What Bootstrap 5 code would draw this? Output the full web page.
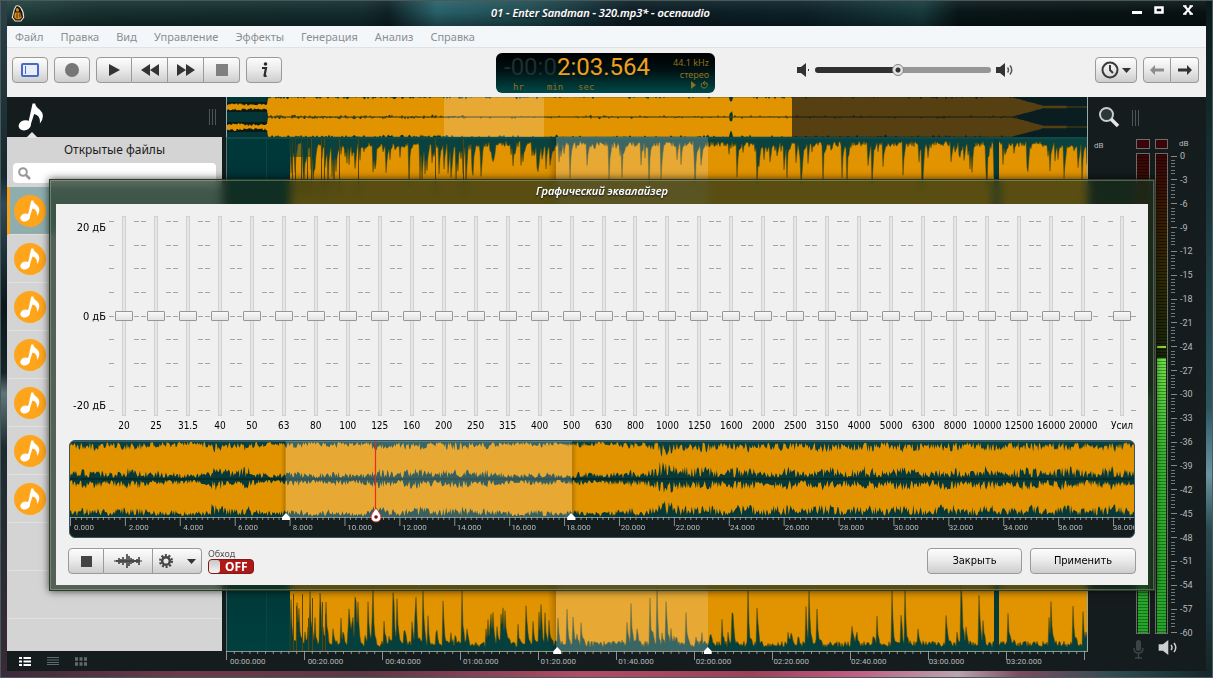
<!DOCTYPE html>
<html lang="ru">
<head>
<meta charset="utf-8">
<meta name="viewport" content="width=device-width, initial-scale=1">
<title>01 - Enter Sandman - 320.mp3* - ocenaudio</title>
<link href="https://cdn.jsdelivr.net/npm/bootstrap@5.3.0/dist/css/bootstrap.min.css" rel="stylesheet">
<script src="https://cdn.jsdelivr.net/npm/bootstrap@5.3.0/dist/js/bootstrap.bundle.min.js"></script>
<style>
:root { --ink:#141c1e; --amber:#e29400; --face:#f0f0f0; --edge:#9a9a9a; }
body { font-family:"DejaVu Sans Condensed","Noto Sans",sans-serif; font-size:11px; line-height:14px; color:#000; overflow:hidden; }
svg { display:block; }
.desk { min-height:100vh; padding:0 7px 7px; box-shadow:inset 0 0 0 1px #46595b;
  background:
   linear-gradient(90deg,#3a2a38 0,#6d3a4a 15%,#5c3644 30%,#b04c66 48%,#9c4058 62%,#c05a80 70%,#b9a3b0 79%,#7c4c60 84%,#2e4a50 92%,#14262a) bottom/100% 7px no-repeat,
   linear-gradient(180deg,#2c4248 0,#16282e 26%,#2f4a58 30%,#0c171b 45%,#15252a 55%,#61767a 58%,#1c2c30 66%,#3a2a38) left/7px 100% no-repeat,
   linear-gradient(180deg,#0b1a1c 0,#173034 25%,#2c5560 60%,#6a95a0 70%,#2a4a50 78%,#132427) right/7px 100% no-repeat,
   linear-gradient(180deg,rgba(255,255,255,.08),transparent 12px,rgba(0,0,0,.35) 26px) top/100% 26px no-repeat,
   linear-gradient(90deg,#22403f 0,#16302f 8%,#132c2e 30%,#0e2126 32%,#286068 36%,#1e4a50 44%,#0c1c24 52%,#0c2128 66%,#173a3c 76%,#091617 79%,#081213 100%) top/100% 26px no-repeat, #0e1a1c; }
.captionbar { height:26px; }
.captionbar h1, .dialog-title { font:italic 600 11px/14px "Open Sans","Noto Sans",sans-serif; color:#fff; text-shadow:0 1px 2px #000,0 0 1px #cdd; margin:0; }
.side-eq { flex:1 1 0; }
.winbtns { gap:9px; padding:5px 12px 0 0; }
.winbtn { border:0; background:none; padding:0; line-height:0; }
.menu-strip { height:22px; background:#f4f7fa; border-bottom:1px solid #dfe3e6; padding-left:8px; gap:17px; font:11px/21px "Noto Sans",sans-serif; }
.menu-strip a { color:#8b8e90; text-decoration:none; }
.toolstrip { height:49px; background:var(--face); display:grid; grid-template-columns:1fr auto 1fr; align-items:start; padding:5px 7px 0 5px; }
.tools { gap:6px; }
.volume { gap:5px; padding-left:6px; }
.tbtn { height:26px; min-width:36px; padding:0 5px; border:1px solid var(--edge); border-radius:4px; background:linear-gradient(#fdfdfd,#e9e9e9 50%,#cdcdcd); display:flex; align-items:center; justify-content:center; color:#3a3a3a; font-size:11px; line-height:14px; }
.tbtn:hover { background:linear-gradient(#fff,#eee 50%,#d6d6d6); }
.tbtn-arrow { min-width:28px; }
.tbtn-wave { min-width:49px; }
.lcd { width:219px; height:40px; border-radius:6px; background:linear-gradient(#000,#001214 45%,#004a48); color:#94701c; padding:0 6px 0 8px; font:9px/12px "Noto Sans",sans-serif; }
.lcd-time { font:24px/29px Roboto,sans-serif; color:#f0a01c; }
.lcd-dim { color:#1e2f31; }
.lcd-units { font:9px/10px "DejaVu Sans Mono",monospace; padding-left:9px; gap:15px; }
.lcd-info { padding-top:4px; }
.hslider { appearance:none; -webkit-appearance:none; width:176px; height:14px; background:none; margin:0; }
.hslider::-webkit-slider-runnable-track { height:6px; border-radius:3px; background:linear-gradient(90deg,#303030 47%,#969696 47%); }
.hslider::-webkit-slider-thumb { -webkit-appearance:none; width:12px; height:12px; margin-top:-3px; border-radius:50%; border:1px solid #858585; background:radial-gradient(circle,#333 0 2px,#e2e2e2 3px); }
.workspace { background:var(--ink); }
.filepane { width:215px; margin-right:4px; }
.filehead { height:40px; padding:0 5px 0 11px; }
.grip { width:8px; height:16px; background:repeating-linear-gradient(90deg,#4c5658 0 1px,transparent 1px 3px); }
.filebody { background:#d4d4d4; font-size:12px; }
.notch { width:12px; height:6px; margin:-5px 0 0 19px; background:#e4e4e4; clip-path:polygon(50% 0,100% 100%,0 100%); }
.filebody h2 { font:12px/16px "Noto Sans",sans-serif; color:#1c1c1c; margin:4px 0 5px; }
.seek { margin:0 6px 4px; height:20px; background:#fff; border-radius:4px; padding:0 5px; }
.seek input { border:0; outline:0; background:none; font-size:11px; padding:0 4px; min-width:0; }
.filerow { height:48px; border-bottom:1px solid #e0e0e0; border-left:3px solid transparent; padding-left:4px; }
.filerow.chosen { background:#8fadad; border-left-color:#f5a11c; }
.disc { width:32px; height:32px; border-radius:50%; background:#ffa51c; color:#fff; }
.viewbar { height:20px; padding-left:12px; gap:16px; }
.viewbar button { border:0; background:none; padding:0; color:#606a6c; }
.overview { height:40px; border-left:1px solid #9aa; border-right:1px solid #9aa; }
.mainwave { border-left:1px solid #5a7474; border-right:1px solid #9aa; position:relative; z-index:1; }
.mainwave svg, .overview svg, .clipwave svg, .scale svg { width:100%; height:100%; }
.mainwave svg { position:absolute; inset:0; }
.scale { height:20px; position:relative; }
.scale svg { position:absolute; inset:0; }
.scale-labels { position:absolute; inset:0; overflow:hidden; padding:6px 0 0 4px; display:flex; font:8px/9px Roboto,sans-serif; color:#b4babb; white-space:nowrap; }
.scale-labels span { flex:none; }
.marker { position:absolute; bottom:-3px; width:8px; height:7px; margin-left:-4px; background:#fff; clip-path:polygon(50% 0,100% 60%,100% 100%,0 100%,0 60%); }
.levels { width:118px; font:8px/8px Roboto,sans-serif; color:#b4babb; }
.levels-head { height:42px; padding:9px 0 0 10px; gap:12px; }
.db-left { width:50px; padding:3px 0 0 6px; }
.meter { width:14px; }
.meter + .meter { margin-left:5px; }
.clip-lamp { height:10px; border:1px solid #6c6c6c; background:#3a0508; margin-bottom:4px; }
.meter-body { border:1px solid #6c6c6c; background:repeating-linear-gradient(180deg,rgba(0,0,0,.45) 0 1px,transparent 1px 3px),linear-gradient(#3c0407,#3a1c04 12%,#2e2b05 25%,#14260a 45%); display:flex; flex-direction:column; justify-content:flex-end; }
.meter-fill { margin:0 1px; background:repeating-linear-gradient(180deg,rgba(0,40,0,.4) 0 1px,transparent 1px 3px),linear-gradient(#6fe04a,#39b532 35%,#25a32b); }
.peak { height:2px; margin:0 1px 10px; background:#8fd23c; }
.dbscale { width:35px; margin:13px 0 -3px 3px; font-size:9px; }
.dbscale > div { height:8px; }
.db-right { position:absolute; left:11px; top:1px; }
.dbscale i { width:6px; height:1px; background:#888; margin-right:3px; }
.dbticks { background:repeating-linear-gradient(180deg,#70797a 0 1px,transparent 1px 20%); width:4px; }
.audio-foot { height:37px; padding:6px 0 0 44px; gap:12px; }
/* equalizer dialog */
.eq { position:absolute; z-index:5; left:49px; right:58px; top:179px; padding:0 6px 5px; border:1px solid #2b3a2c; background:rgba(24,44,26,.68); backdrop-filter:blur(5px); box-shadow:inset 0 0 0 1px rgba(190,210,170,.35),0 0 8px rgba(0,0,0,.7); }
.dialog-title { height:24px; padding-top:4px; text-align:center; }
.eq-body { background:var(--face); padding:12px 12px 11px; }
.bands { display:grid; grid-template-columns:40px 992fr 38fr; margin-right:-1px; }
.gainlabels { height:200px; padding:5px 2px 3px 0; margin-left:-12px; }
.band { flex:1 1 0; min-width:0; }
.band-rail { height:200px; position:relative; }
.band-ticks { position:absolute; left:0; right:0; top:5px; bottom:5px; padding:0 1px; }
.band-ticks i { height:1px; background:linear-gradient(90deg,#a4a4a4 5px,transparent 5px calc(100% - 5px),#a4a4a4 calc(100% - 5px)); }
.vslider { position:absolute; left:50%; top:50%; width:200px; height:18px; margin:0; appearance:none; -webkit-appearance:none; background:none; transform:translate(-50%,-50%) rotate(-90deg); }
.vslider::-webkit-slider-runnable-track { height:4px; background:#e6e6e6; border:1px solid #d0d0d0; }
.vslider::-webkit-slider-thumb { -webkit-appearance:none; width:10px; height:18px; margin-top:-8px; background:linear-gradient(90deg,#e2e2e2,#f8f8f8); border:1px solid #969696; border-radius:1px; }
.band label { font-size:10px; line-height:20px; white-space:nowrap; }
.clip { background:var(--ink); border:1px solid #39535a; border-radius:6px; overflow:hidden; margin:4px 1px 10px; }
.clipwave { height:76px; position:relative; z-index:1; }
.playhead { position:absolute; top:0; bottom:-6px; width:12px; margin-left:-6px; }
.playhead::before { content:""; position:absolute; left:5px; top:0; bottom:14px; width:1px; background:#f02a18; box-shadow:0 0 1px #f02a18; }
.playhead svg { position:absolute; left:0; bottom:0; width:12px; height:16px; }
.bypass { font:9px/10px "Noto Sans",sans-serif; color:#555; margin-left:6px; }
.bypass input { appearance:none; -webkit-appearance:none; position:absolute; inset:0; margin:0; width:100%; height:100%; }
.toggle-face { position:relative; width:46px; height:15px; border-radius:4px; border:1px solid #7c1a1a; background:#b01818; color:#fff; font:bold 12px/13px "Noto Sans",sans-serif; padding-left:16px; }
.toggle-face::before { content:""; position:absolute; left:0; top:0; bottom:0; width:11px; border-radius:3px; background:linear-gradient(#c8c8c8,#f4f4f4); }
.pushbtn { font-size:11px; color:#000; min-width:95px; }
.pushbtn-wide { min-width:106px; }
</style>
</head>
<body>
<svg width="0" height="0" class="position-absolute" aria-hidden="true">
  <symbol id="note" viewBox="0 0 24 27"><ellipse cx="6" cy="21.5" rx="6" ry="4.8" transform="rotate(-18 6 21.5)" fill="currentColor"/><path d="M9 21 13.500.5H16Q16.500 4 20.500 6.500 26.500 12 20.500 20 21.500 12 15 10.500L12 20Q11 23.500 8 24.500Z" fill="currentColor"/></symbol>
  <symbol id="spk" viewBox="0 0 10 14"><path d="M0 4h4l5-4v14L4 10H0Z" fill="currentColor"/></symbol>
</svg>
<div class="desk d-flex flex-column position-relative">
  <header class="captionbar d-flex align-items-center">
    <div class="side-eq">
      <svg width="14" height="17" viewBox="0 0 14 18" class="ms-1"><path d="M5 1Q8 0 10 3Q13 7 13 13L10 17H4L1 13Q2 9 3 5Z" fill="#16100a" stroke="#e8e0d0" stroke-width="1.200"/><path d="M5 4Q7 2 8 5V7H5ZM3.500 8h6l1.500 5-2 2H5l-2-2Z" fill="#d98a1c"/><path d="M6 9v5M9 9v4" stroke="#3a2408"/></svg>
    </div>
    <h1>01 - Enter Sandman - 320.mp3* - ocenaudio</h1>
    <div class="side-eq winbtns d-flex justify-content-end align-self-start">
      <button class="winbtn" aria-label="Свернуть"><svg width="14" height="10" viewBox="0 0 14 10"><path d="M2 6h10v3H2Z" fill="#fff"/></svg></button>
      <button class="winbtn" aria-label="Развернуть"><svg width="12" height="10" viewBox="0 0 12 10"><path d="M2.500 2.500h7v5h-7Z" fill="none" stroke="#fff" stroke-width="2.500"/></svg></button>
      <button class="winbtn ms-2" aria-label="Закрыть окно"><svg width="12" height="10" viewBox="0 0 12 10"><path d="M2.500 1l7 8M9.500 1l-7 8" stroke="#fff" stroke-width="2"/><path d="M1 1h3.500M7.500 1H11M1 9h3.500M7.500 9H11" stroke="#fff" stroke-width="1.500"/></svg></button>
    </div>
  </header>

  <nav class="menu-strip d-flex">
    <a href="#">Файл</a><a href="#">Правка</a><a href="#">Вид</a><a href="#">Управление</a><a href="#">Эффекты</a><a href="#">Генерация</a><a href="#">Анализ</a><a href="#">Справка</a>
  </nav>

  <div class="toolstrip">
    <div class="tools d-flex pt-1">
      <button class="tbtn" aria-label="Панель"><svg width="18" height="14" viewBox="0 0 18 14"><rect x="1" y="1" width="16" height="12" rx="1" fill="#e9eefb" stroke="#4a68c8" stroke-width="2"/><path d="M4.500 3v8" stroke="#4a68c8"/></svg></button>
      <button class="tbtn" aria-label="Запись"><svg width="14" height="14"><circle cx="7" cy="7" r="7" fill="#767676"/></svg></button>
      <div class="btn-group">
        <button class="tbtn rounded-end-0" aria-label="Пуск"><svg width="12" height="12"><path d="M1 0 12 6 1 12Z" fill="#333"/></svg></button>
        <button class="tbtn rounded-0 border-start-0" aria-label="Назад"><svg width="18" height="12"><path d="M9 0v12L0 6ZM18 0v12L9 6Z" fill="#333"/></svg></button>
        <button class="tbtn rounded-0 border-start-0" aria-label="Вперёд"><svg width="18" height="12"><path d="M0 0v12l9-6ZM9 0v12l9-6Z" fill="#333"/></svg></button>
        <button class="tbtn rounded-start-0 border-start-0" aria-label="Стоп"><svg width="12" height="12"><path d="M0 0h12v12H0Z" fill="#808080"/></svg></button>
      </div>
      <button class="tbtn" aria-label="Сведения"><svg width="9" height="16" viewBox="0 0 9 16"><circle cx="5.500" cy="2" r="1.800" fill="#2c2c2c"/><path d="M2 6h4L4.500 13.500q0 1 2 0" fill="none" stroke="#2c2c2c" stroke-width="2.200"/></svg></button>
    </div>
    <div class="lcd d-flex justify-content-between">
      <div>
        <div class="lcd-time"><span class="lcd-dim">-00:0</span>2:03.564</div>
        <div class="lcd-units d-flex"><span class="me-2">hr</span><span>min</span><span>sec</span></div>
      </div>
      <div class="lcd-info text-end"><div>44.1 kHz</div><div>стерео</div><svg width="18" height="8" class="ms-auto"><path d="M0 0 5 4 0 8Z" fill="#8c701c"/><path d="M11 2Q9 7 13 7T16 2H12M14 0l-2 2 2 2" fill="none" stroke="#8c701c"/></svg></div>
    </div>
    <div class="tools d-flex align-items-center pt-1">
      <div class="volume d-flex align-items-center mx-auto">
        <svg width="13" height="14" viewBox="0 0 13 14" color="#333"><use href="#spk" width="10" height="14"/><path d="M11.500 6v2" stroke="#333"/></svg>
        <input class="hslider" type="range" value="47" aria-label="Громкость">
        <svg width="18" height="14" viewBox="0 0 18 14" color="#333"><use href="#spk" width="10" height="14"/><path d="M11.500 4.500q2 2.500 0 5M14 2.500q3.500 4.500 0 9" fill="none" stroke="#555" stroke-width="1.500"/></svg>
      </div>
      <button class="tbtn" aria-label="История"><svg width="30" height="18" viewBox="0 0 30 18"><circle cx="9" cy="9" r="7.500" fill="none" stroke="#3a3a3a" stroke-width="2"/><path d="M9 4v5l3 3" fill="none" stroke="#3a3a3a" stroke-width="2"/><path d="M21 7h9l-4.500 5Z" fill="#333"/></svg></button>
      <div class="btn-group">
        <button class="tbtn tbtn-arrow rounded-end-0" aria-label="Отменить"><svg width="14" height="10"><path d="M0 5 5 0v3.500h9v3H5V10Z" fill="#8c8c8c"/></svg></button>
        <button class="tbtn tbtn-arrow rounded-start-0 border-start-0" aria-label="Повторить"><svg width="14" height="10"><path d="M14 5 9 0v3.500H0v3h9V10Z" fill="#333"/></svg></button>
      </div>
    </div>
  </div>

  <main class="workspace d-flex flex-grow-1">
    <aside class="filepane d-flex flex-column flex-shrink-0">
      <div class="filehead d-flex justify-content-between align-items-center">
        <svg width="26" height="28" color="#fff"><use href="#note"/></svg><span class="grip"></span>
      </div>
      <div class="filebody flex-grow-1">
        <div class="notch"></div>
        <h2 class="text-center">Открытые файлы</h2>
        <div class="seek d-flex align-items-center"><svg width="13" height="13"><circle cx="5" cy="5" r="3.800" fill="none" stroke="#999" stroke-width="2"/><path d="M8 8l4 4" stroke="#999" stroke-width="2.500"/></svg><input type="text" class="flex-grow-1" aria-label="Поиск файлов"></div>
        <div id="files"></div>
      </div>
      <div class="viewbar d-flex align-items-center">
        <button aria-label="Список" class="text-white"><svg width="12" height="9"><path d="M0 1h3M0 4.500h3M0 8h3M4.500 1H12M4.500 4.500H12M4.500 8H12" stroke="currentColor" stroke-width="2"/></svg></button>
        <button aria-label="Строки"><svg width="12" height="8"><path d="M0 .5h12M0 3h12M0 5.500h12M0 7.500h12" stroke="currentColor"/></svg></button>
        <button aria-label="Сетка"><svg width="12" height="9"><path d="M0 2h3M4.500 2h3M9 2h3M0 7h3M4.500 7h3M9 7h3" stroke="currentColor" stroke-width="3.500"/></svg></button>
      </div>
    </aside>

    <section class="d-flex flex-column flex-grow-1">
      <div class="overview"><svg id="overview" viewBox="0 0 860 40" preserveAspectRatio="none"></svg></div>
      <div class="mainwave flex-grow-1"><svg id="mainwave" viewBox="0 0 860 515" preserveAspectRatio="none"></svg>
        <span class="marker" style="left:38.400%"></span><span class="marker" style="left:55.900%"></span></div>
      <div class="scale"><svg id="mainticks" viewBox="0 0 862 20" preserveAspectRatio="none"></svg><div class="scale-labels" id="mainlabels"></div></div>
    </section>

    <aside class="levels d-flex flex-column flex-shrink-0">
      <div class="levels-head d-flex">
        <svg width="22" height="22"><circle cx="8.500" cy="8.500" r="6.500" fill="#2a3638" stroke="#c8cccc" stroke-width="2"/><path d="M13 13l7 7" stroke="#e4e6e6" stroke-width="3.500"/></svg>
        <span class="grip mt-1"></span>
      </div>
      <div class="d-flex flex-grow-1">
        <span class="db-left">dB</span>
        <div class="meter d-flex flex-column"><div class="clip-lamp"></div><div class="meter-body flex-grow-1"><div class="meter-fill" style="height:50%"></div></div></div>
        <div class="meter d-flex flex-column"><div class="clip-lamp"></div><div class="meter-body flex-grow-1"><div class="peak"></div><div class="meter-fill" style="height:57.400%"></div></div></div>
        <div class="d-flex flex-column position-relative">
          <span class="db-right">dB</span>
          <div class="dbscale d-flex flex-column justify-content-between flex-grow-1" id="db"></div>
        </div>
      </div>
      <div class="audio-foot d-flex">
        <svg width="14" height="20" viewBox="0 0 14 20"><rect x="4" y="0" width="5" height="11" rx="2.500" fill="#3c4446"/><path d="M2 8q0 5 4.500 5T11 8M6.500 13v5M3 18h7" fill="none" stroke="#3c4446" stroke-width="1.500"/></svg>
        <svg width="20" height="16" viewBox="0 0 20 16" color="#ccd0d0"><use href="#spk" width="12" height="15"/><path d="M13 5q2 2.500 0 5M16 3q3.500 4.500 0 9" fill="none" stroke="#ccd0d0" stroke-width="1.500"/></svg>
      </div>
    </aside>
  </main>

  <section class="eq" role="dialog" aria-labelledby="eqtitle">
    <h2 class="dialog-title" id="eqtitle">Графический эквалайзер</h2>
    <div class="eq-body">
      <div class="bands">
        <div class="gainlabels d-flex flex-column justify-content-between text-end"><span>20 дБ</span><span>0 дБ</span><span>-20 дБ</span></div>
        <div class="d-flex" id="bands"></div>
        <div class="d-flex ps-2" id="gain"></div>
      </div>
      <div class="clip">
        <div class="clipwave"><svg id="clipwave" viewBox="0 0 1066 76" preserveAspectRatio="none"></svg>
          <span class="marker" style="left:20.300%"></span><span class="marker" style="left:47.100%"></span>
          <span class="playhead" style="left:28.800%"><svg viewBox="0 0 12 16"><path d="M6 1Q11 7 11 10.500A5 4.500 0 0 1 1 10.500Q1 7 6 1Z" fill="#fff" stroke="#c8321c"/><circle cx="6" cy="10" r="1.800" fill="#7c1010"/></svg></span>
        </div>
        <div class="scale"><svg id="clipticks" viewBox="0 0 1066 20" preserveAspectRatio="none"></svg><div class="scale-labels" id="cliplabels"></div></div>
      </div>
      <div class="d-flex align-items-center">
        <div class="btn-group">
          <button class="tbtn rounded-end-0" aria-label="Остановить"><svg width="11" height="11"><path d="M0 0h11v11H0Z" fill="#444"/></svg></button>
          <button class="tbtn tbtn-wave rounded-0 border-start-0" aria-label="Волна"><svg width="28" height="14" viewBox="0 0 28 14"><path d="M0 7h28" stroke="#333"/><path d="M3 6v2M5 4v6M7 5v4M9 3v8M11 5v4M13 0v14M15 2v10M17 4v6M19 5v4M21 6v2M23 5v4M25 3v8" stroke="#333" stroke-width="1.500"/></svg></button>
          <button class="tbtn tbtn-wave rounded-start-0 border-start-0" aria-label="Настройки"><svg width="37" height="14" viewBox="0 0 37 14"><circle cx="7" cy="7" r="5.800" fill="none" stroke="#444" stroke-width="2.400" stroke-dasharray="2 1.640"/><circle cx="7" cy="7" r="3.800" fill="none" stroke="#444" stroke-width="2.500"/><path d="M28 5h9l-4.500 5Z" fill="#333"/></svg></button>
        </div>
        <label class="bypass" for="bypass">Обход
          <span class="toggle-face d-block"><input id="bypass" type="checkbox" role="switch">OFF</span>
        </label>
        <button class="tbtn pushbtn ms-auto me-2">Закрыть</button>
        <button class="tbtn pushbtn pushbtn-wide">Применить</button>
      </div>
    </div>
  </section>
</div>

<script>
const $ = id => document.getElementById(id);
let seed = 7;
const rnd = () => (seed = (seed * 16807) % 2147483647) / 2147483647;
const TEAL = '<linearGradient id="ID" x2="0" y2="1"><stop stop-color="#00383a"/><stop offset=".5" stop-color="#012424"/><stop offset="1" stop-color="#00403f"/></linearGradient>';

// Jagged band edge between x0 and x1; depth(x) gives the distance from base line y in direction dir.
function edge(x0, x1, y, dir, depth, step) {
  let d = `M${x0} ${y}`;
  for (let x = x0; x <= x1; x += step) d += `L${x} ${(y + dir * depth(x)).toFixed(1)}`;
  return d + `L${x1} ${y}Z`;
}
const path = (d, fill, extra = '') => `<path d="${d}" fill="${fill}" ${extra}/>`;
const rect = (x, y, w, h, fill) => `<rect x="${x}" y="${y}" width="${w}" height="${h}" fill="${fill}"/>`;

// Whole-file overview, two channels
(() => {
  const half = x => {
    if (x < 41) return (x < 15 ? 1.5 : 1) + rnd() * 2.5;
    if (x < 785) return 10 - (rnd() < (x < 240 ? .45 : .12) ? rnd() * 2.5 : .3) - (Math.abs(x - 504) < 2 ? 4 : 0);
    if (x < 818) return 10 - (x - 785) * .27 - rnd() * .6;
    return x < 840 ? 1.2 : .6;
  };
  let s = rect(0, 0, 860, 40, '#033436');
  for (const c of [10, 30]) {
    s += rect(0, c - 5, 41, 10, '#0c1a14');
    let up = '', dn = '';
    for (let x = 0; x <= 860; x++) {
      up += `${x ? 'L' : 'M'}${x} ${(c - half(x)).toFixed(1)}`;
      dn = `L${x} ${(c + half(x)).toFixed(1)}` + dn;
    }
    s += path(up + dn + 'Z', '#e29400');
  }
  s += rect(41, 19.5, 750, 1, '#6a4804') + rect(217, 0, 100, 40, 'rgba(255,255,255,.2)') + rect(565, 0, 295, 40, 'rgba(14,20,24,.66)');
  $('overview').innerHTML = s;
})();

// Zoomed track
(() => {
  let s = TEAL.replace('ID', 'tg') + rect(0, 0, 860, 515, 'url(#tg)') + rect(63, 0, 797, 515, '#e29400');
  s += rect(39, 0, 1, 515, '#0a4444');
  // Peaks come in clusters: each one falls away over a few samples.
  const spikes = (pLeft, pRight, tall) => {
    let peak = 0;
    return x => {
      const p = x < 150 ? pLeft : x < 330 ? pLeft * .7 : pRight;
      if (rnd() < p) peak = Math.max(peak, (.15 + Math.pow(rnd(), 1.5)) * tall);
      const v = peak * (.6 + rnd() * .4);
      peak *= .45;
      return 4 + rnd() * 6 + v;
    };
  };
  const skin = 'stroke="#5a4a08" stroke-width=".5"';
  s += path(edge(63, 860, 0, 1, spikes(.42, .17, 44), 1), '#0a4240', skin);
  s += path(edge(63, 860, 515, -1, spikes(.34, .13, 56), 1), '#05403f', skin);
  for (const x of [65, 68, 74, 80, 84, 94, 97, 112, 131, 208, 236]) s += rect(x, 0, 1, 60, '#5a4508') + (x < 100 ? rect(x + 1, 450 + x % 9 * 4, 1, 65, '#5a4508') : '');
  s += rect(63, 0, 21, 20, 'rgba(4,60,58,.5)');
  s += rect(767, 0, 5, 515, '#053c3a') + rect(0, 0, 860, 2, '#0c4a4c');
  s += '<linearGradient id="sh"><stop stop-color="#000" stop-opacity="0"/><stop offset="1" stop-color="#000" stop-opacity=".22"/></linearGradient>' + rect(321, 0, 8, 515, 'url(#sh)');
  s += rect(329, 0, 152, 515, 'rgba(255,255,255,.2)');
  $('mainwave').innerHTML = s;
})();

// Clip preview in the dialog
(() => {
  const W = 1066;
  const swell = x => (x < 90 ? .9 : x < 140 ? .6 : x < 180 ? 1.1 : x < 300 ? .65 : x < 420 ? .9 : x < 560 ? .6 : x < 590 ? .9 : x < 620 ? 1.4 : 1.05) * (.6 + .4 * Math.abs(Math.sin(x / 13)));
  const d = k => x => k * swell(x) * (.15 + rnd() * 1.1);
  let s = rect(0, 0, W, 76, '#e29400');
  s += path(edge(0, W, 0, 1, d(9), 1), '#0a4040') + path(edge(0, W, 38, -1, d(10), 1), '#063a3a') + path(edge(0, W, 38, 1, d(9), 1), '#063a3a') + path(edge(0, W, 76, -1, d(10), 1), '#063a3a');
  s += '<linearGradient id="sl"><stop stop-color="#000" stop-opacity="0"/><stop offset="1" stop-color="#000" stop-opacity=".2"/></linearGradient><linearGradient id="sr"><stop stop-color="#000" stop-opacity=".2"/><stop offset="1" stop-color="#000" stop-opacity="0"/></linearGradient>';
  s += rect(0, 37.5, W, 1, '#021a1a') + rect(0, 0, W, 1, '#2a6268') + rect(211, 0, 5, 76, 'url(#sl)') + rect(503, 0, 5, 76, 'url(#sr)') + rect(216, 0, 287, 76, 'rgba(255,255,255,.2)');
  $('clipwave').innerHTML = s;
})();

function ticks(id, w, major, n) {
  let d = `M0 .5H${w}`;
  for (let i = 0; i * major / n <= w; i++) d += `M${(i * major / n + .5).toFixed(1)} 0v${i % n ? 3 : 9}`;
  $(id).innerHTML = `<path d="${d}" stroke="#a8b0b0" stroke-width=".8" fill="none"/>`;
}
ticks('mainticks', 862, 78, 10);
ticks('clipticks', 1066, 55, 10);
const two = n => String(n).padStart(2, '0');
$('mainlabels').innerHTML = Array.from({length: 11}, (_, i) => `<span style="width:${(7800 / 862).toFixed(3)}%">${two(Math.floor(i / 3))}:${two(i % 3 * 20)}.000</span>`).join('');
$('cliplabels').innerHTML = Array.from({length: 20}, (_, i) => `<span style="width:${(5500 / 1066).toFixed(3)}%">${i * 2}.000</span>`).join('');

$('files').innerHTML = Array.from({length: 9}, (_, i) => `<div class="filerow d-flex align-items-center ${i ? '' : 'chosen'}">${i < 7 ? '<span class="disc d-flex align-items-center justify-content-center"><svg width="20" height="22"><use href="#note"/></svg></span>' : ''}</div>`).join('');
$('db').innerHTML = Array.from({length: 21}, (_, i) => `<div class="d-flex align-items-center"><i></i>${i ? -3 * i : 0}</div>`).join('<div class="dbticks flex-grow-1"></div>');

const band = name => `<div class="band d-flex flex-column align-items-stretch"><div class="band-rail"><div class="band-ticks d-flex flex-column justify-content-between">${'<i></i>'.repeat(9)}</div><input class="vslider" type="range" min="-20" max="20" value="0" id="b${name}"></div><label class="d-flex justify-content-center" for="b${name}">${name}</label></div>`;
$('bands').innerHTML = [20, 25, 31.5, 40, 50, 63, 80, 100, 125, 160, 200, 250, 315, 400, 500, 630, 800, 1000, 1250, 1600, 2000, 2500, 3150, 4000, 5000, 6300, 8000, 10000, 12500, 16000, 20000].map(band).join('');
$('gain').innerHTML = band('Усил');
</script>
</body>
</html>
